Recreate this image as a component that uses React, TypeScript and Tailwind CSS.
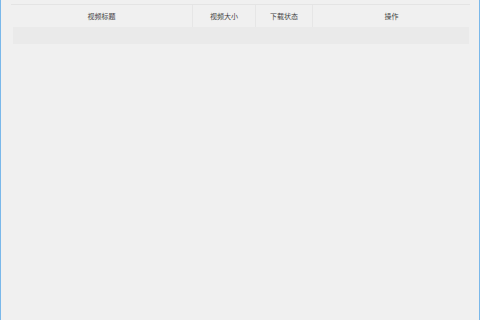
import React from 'react'

const cols = [
  { label: '视频标题', w: 'w-[182px]' },
  { label: '视频大小', w: 'w-[63px]' },
  { label: '下载状态', w: 'w-[57px]' },
  { label: '操作', w: 'flex-1' },
]

export default function App() {
  return (
    <div
      className="w-[480px] h-[320px] bg-[#f0f0f0] border-x border-[#7ab8ea] overflow-hidden"
      style={{ fontFamily: '"Microsoft YaHei", "Noto Sans CJK SC", sans-serif' }}
    >
      <div className="pt-[4px] pl-[10px] pr-[9px]">
        <div className="flex h-[23px] border-t border-[#e4e4e4]">
          {cols.map((c, i) => (
            <div
              key={c.label}
              className={`${c.w} flex items-center justify-center text-[7px] text-[#444] ${
                i < cols.length - 1 ? 'border-r border-[#e6e6e6]' : ''
              }`}
            >
              {c.label}
            </div>
          ))}
        </div>
        <div className="ml-[2px] mr-[1px] h-[17px] bg-[#eaeaea]" />
      </div>
    </div>
  )
}
